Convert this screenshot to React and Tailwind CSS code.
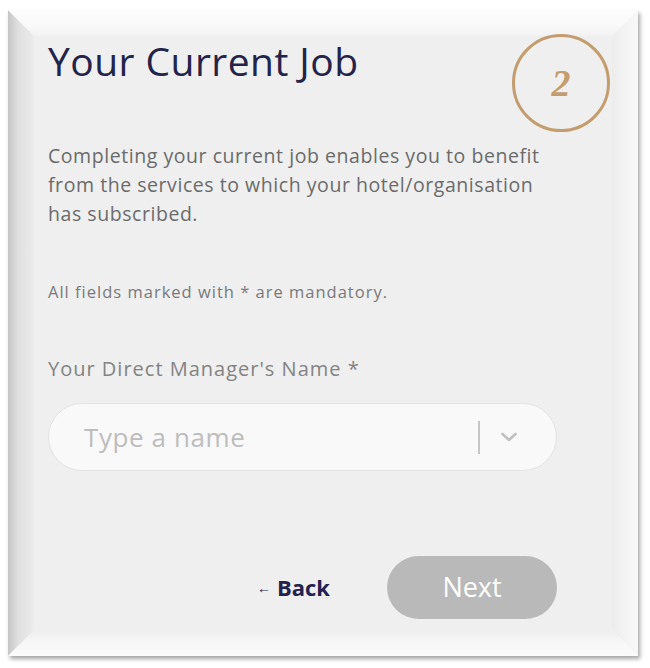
export default function App() {
  const font = { fontFamily: '"Open Sans", "Liberation Sans", sans-serif' };
  return (
    <div className="w-[650px] h-[668px] bg-white pl-[8px] pt-[10px]" style={font}>
      <div className="relative w-[630px] h-[646px] border-[26px] border-t-[#fcfcfc] border-l-[#d6d6d6] border-r-[#f6f6f6] border-b-[#f8f8f8] bg-[#efefef] shadow-[2px_3px_4px_rgba(0,0,0,0.35)]">
        {/* bevel overlays */}
        <div className="absolute left-[-26px] top-[-26px] w-[26px] h-[646px] bg-[linear-gradient(to_right,#c6c6c6,#e0e0e0_40%,#ececec)] [clip-path:polygon(0_0,100%_26px,100%_calc(100%-26px),0_100%)]" />
        <div className="absolute left-[-26px] top-[-26px] w-[630px] h-[26px] bg-[linear-gradient(to_bottom,#fdfdfd,#f9f9f9_60%,#f2f2f2)] [clip-path:polygon(0_0,100%_0,calc(100%-26px)_100%,26px_100%)]" />
        <div className="absolute right-[-26px] top-[-26px] w-[26px] h-[646px] bg-[linear-gradient(to_left,#f7f7f7,#f3f3f3_50%,#ececec)] [clip-path:polygon(0_26px,100%_0,100%_100%,0_calc(100%-26px))]" />
        <div className="absolute left-[-26px] bottom-[-26px] w-[630px] h-[26px] bg-[linear-gradient(to_top,#fbfbfb,#f6f6f6_60%,#eeeeee)] [clip-path:polygon(26px_0,calc(100%-26px)_0,100%_100%,0_100%)]" />

        <div className="absolute left-[478px] top-[-2px] w-[98px] h-[98px] rounded-full border-[3px] border-[#c49d6f] flex items-center justify-center">
          <span className="text-[38px] italic font-bold text-[#c49d6f] leading-none" style={{ fontFamily: '"Liberation Serif", serif' }}>2</span>
        </div>

        <div className="relative flex flex-col pl-[14px] pt-[1px]">
          <h1 className="text-[39px] leading-[48px] text-[#24234a] tracking-[0.45px]">Your Current Job</h1>
          <p className="mt-[56px] text-[19.5px] leading-[29px] text-[#6b6b6b] w-[500px] tracking-[0.55px]">
            Completing your current job enables you to benefit from the services to which your hotel/organisation has subscribed.
          </p>
          <p className="mt-[54px] text-[16.5px] leading-[20px] text-[#797979] tracking-[1px]">All fields marked with * are mandatory.</p>
          <label className="mt-[54px] text-[20px] leading-[26px] text-[#838383] tracking-[1px]">Your Direct Manager's Name *</label>
          <div className="mt-[21px] w-[509px] h-[68px] rounded-full bg-[#f9f9f9] border border-[#e3e3e3] flex items-center pl-[35px] pr-[38px]">
            <span className="flex-1 text-[26px] text-[#bdbdbd] tracking-[0.6px]">Type a name</span>
            <div className="w-[2px] h-[33px] bg-[#c6c6c6]" />
            <svg className="ml-[20px]" width="18" height="18" viewBox="0 0 18 18" fill="none" stroke="#c0c0c0" strokeWidth="2.6" strokeLinecap="round" strokeLinejoin="round">
              <path d="M2.5 6l6.5 6 6.5-6" />
            </svg>
          </div>
          <div className="mt-[85px] flex items-center justify-end w-[509px]">
            <button className="flex items-center gap-[6px] font-bold text-[22px] text-[#23224f] mr-[57px]">
              <span className="text-[14px] font-bold">←</span>Back
            </button>
            <button className="w-[170px] h-[63px] rounded-full bg-[#b9b9b9] text-white text-[27px]">Next</button>
          </div>
        </div>
      </div>
    </div>
  );
}
